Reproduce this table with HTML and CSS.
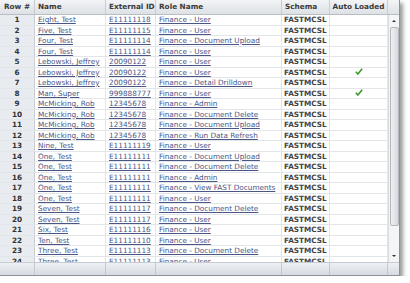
FILE: index.html
```html
<!DOCTYPE html>
<html>
<head>
<meta charset="utf-8">
<link rel="stylesheet" href="styles.css">
</head>
<body>
<div class="grid">
  <div class="head">
    <div class="hc center">Row #</div>
    <div class="hc">Name</div>
    <div class="hc">External ID</div>
    <div class="hc">Role Name</div>
    <div class="hc">Schema</div>
    <div class="hc center">Auto Loaded</div>
    <div class="hc last"></div>
  </div>
  <div class="body">
    <div class="rows" id="rows"></div>
    <div class="scroll">
      <div class="arrow up"></div>
      <div class="thumb"></div>
      <div class="arrow down"></div>
    </div>
  </div>
  <div class="foot">
    <div class="fc"></div><div class="fc"></div><div class="fc"></div><div class="fc"></div><div class="fc"></div><div class="fc"></div><div class="fc last"></div>
  </div>
</div>
<script>
var data = [
["Eight, Test","E11111118","Finance - User",0],
["Five, Test","E11111115","Finance - User",0],
["Four, Test","E11111114","Finance - Document Upload",0],
["Four, Test","E11111114","Finance - User",0],
["Lebowski, Jeffrey","20090122","Finance - User",0],
["Lebowski, Jeffrey","20090122","Finance - User",1],
["Lebowski, Jeffrey","20090122","Finance - Detail Drilldown",0],
["Man, Super","999888777","Finance - User",1],
["McMicking, Rob","12345678","Finance - Admin",0],
["McMicking, Rob","12345678","Finance - Document Delete",0],
["McMicking, Rob","12345678","Finance - Document Upload",0],
["McMicking, Rob","12345678","Finance - Run Data Refresh",0],
["Nine, Test","E11111119","Finance - User",0],
["One, Test","E11111111","Finance - Document Upload",0],
["One, Test","E11111111","Finance - Document Delete",0],
["One, Test","E11111111","Finance - Admin",0],
["One, Test","E11111111","Finance - View FAST Documents",0],
["One, Test","E11111111","Finance - User",0],
["Seven, Test","E11111117","Finance - Document Delete",0],
["Seven, Test","E11111117","Finance - User",0],
["Six, Test","E11111116","Finance - User",0],
["Ten, Test","E11111110","Finance - User",0],
["Three, Test","E11111113","Finance - Document Delete",0],
["Three, Test","E11111113","Finance - User",0]
];
var check = '<svg class="chk" width="8" height="7" viewBox="0 0 8 7"><path d="M0.8 3.8 L2.9 6 L7.2 0.8" fill="none" stroke="#3c9a28" stroke-width="1.6"/></svg>';
var html = "";
data.forEach(function(r, i){
  html += '<div class="row">' +
    '<div class="c num">' + (i+1) + '</div>' +
    '<div class="c"><a class="lnk">' + r[0] + '</a></div>' +
    '<div class="c"><a class="lnk">' + r[1] + '</a></div>' +
    '<div class="c"><a class="lnk">' + r[2] + '</a></div>' +
    '<div class="c schema">FASTMCSL</div>' +
    '<div class="c center">' + (r[3] ? check : '') + '</div>' +
    '</div>';
});
document.getElementById("rows").innerHTML = html;
</script>
</body>
</html>
```

FILE: styles.css
```css
html, body {
  margin: 0;
  padding: 0;
  background: #fff;
}
body {
  font-family: "DejaVu Sans", sans-serif;
  font-size: 7.3px;
  color: #333;
}
.grid {
  width: 399px;
  height: 275px;
  border-right: 1px solid #8e9195;
  border-bottom: 1px solid #8e9195;
  box-shadow: 3px 3px 4px rgba(0,0,0,0.4);
  display: flex;
  flex-direction: column;
  overflow: hidden;
  background: #fff;
}
.head, .foot {
  display: grid;
  grid-template-columns: 35px 71px 50px 126px 48px 58px 11px;
}
.head {
  height: 15px;
  background: linear-gradient(#f2f4f6, #dde1e5);
  border-bottom: 1px solid #b9bec3;
  box-sizing: border-box;
  flex: none;
}
.hc {
  font-weight: bold;
  line-height: 14px;
  padding-left: 3px;
  border-right: 1px solid #c9cdd2;
  white-space: nowrap;
  overflow: hidden;
  color: #3a3a3a;
}
.hc.center { text-align: center; padding-left: 0; }
.hc.last { border-right: none; }
.body {
  flex: 1;
  display: flex;
  overflow: hidden;
  min-height: 0;
}
.rows {
  width: 388px;
  overflow: hidden;
}
.row {
  display: grid;
  grid-template-columns: 35px 71px 50px 126px 48px 58px;
  height: 10.5px;
  box-sizing: border-box;
  border-bottom: 1px solid #e3e6e9;
}
.c {
  line-height: 9.5px;
  padding-left: 3px;
  border-right: 1px solid #e3e6e9;
  white-space: nowrap;
  overflow: hidden;
}
.c.num {
  background: #e8ecf0;
  text-align: center;
  padding-left: 0;
  font-weight: bold;
  border-right: 1px solid #c9cdd2;
  color: #333;
}
.c.center { text-align: center; padding-left: 0; }
.c.schema { font-weight: bold; color: #444; padding-left: 2px; }
.lnk {
  color: #4a5684;
  text-decoration: underline;
  cursor: pointer;
}
.chk { vertical-align: -0.5px; }
.scroll {
  width: 11px;
  background: #f4f5f6;
  border-left: 1px solid #d9dcdf;
  box-sizing: border-box;
  display: flex;
  flex-direction: column;
  align-items: center;
}
.arrow {
  width: 0;
  height: 0;
  border-left: 2px solid transparent;
  border-right: 2px solid transparent;
  flex: none;
}
.arrow.up {
  border-bottom: 2px solid #333;
  margin-top: 5px;
}
.arrow.down {
  border-top: 2px solid #333;
  margin-top: auto;
  margin-bottom: 5px;
}
.thumb {
  width: 9px;
  height: 199px;
  margin-top: 5px;
  box-sizing: border-box;
  border: 1px solid #b3b7bc;
  border-radius: 2px;
  background: linear-gradient(90deg, #eef0f2, #d6d9dc);
  flex: none;
}
.foot {
  height: 13px;
  flex: none;
  background: linear-gradient(#edf1f5, #d5dbe1);
  border-top: 1px solid #c5cbd1;
  box-sizing: border-box;
}
.fc {
  border-right: 1px solid #c3c8ce;
}
.fc.last { border-right: none; }
```
